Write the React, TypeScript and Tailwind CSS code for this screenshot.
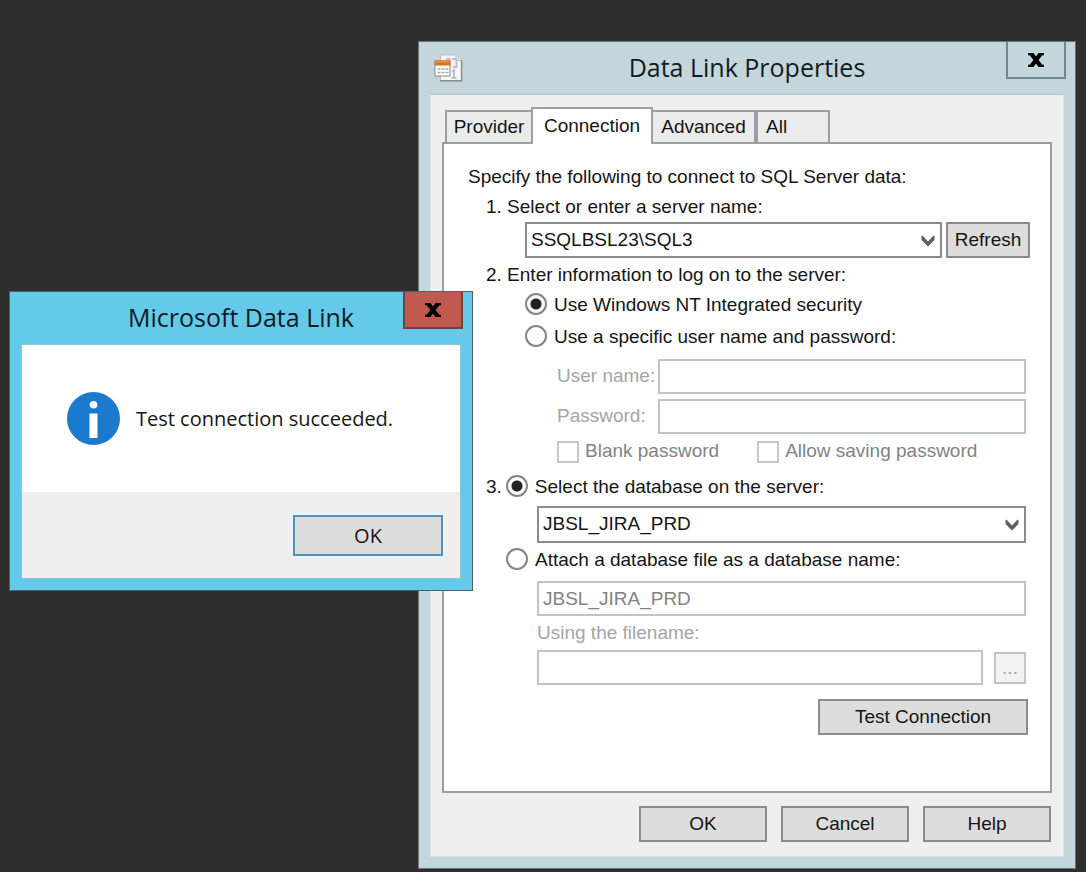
import type { ReactNode } from "react";

const TITLE_FONT = "font-['Open_Sans','Noto_Sans',sans-serif]";

const DATABASE = "JBSL_JIRA_PRD";
const SERVER = "SSQLBSL23\\SQL3";

function CloseGlyph() {
  return (
    <svg width="16" height="14" viewBox="0 0 16 14" aria-hidden="true">
      <path
        d="M0 0h5.500L8 3.600 10.500 0H16v2.300h-1.700L10.600 7l3.700 4.700H16V14h-5.500L8 10.400 5.500 14H0v-2.300h1.700L5.400 7 1.700 2.300H0Z"
        fill="#000"
      />
    </svg>
  );
}

function DataLinkIcon() {
  return (
    <svg width="29" height="28" viewBox="0 0 29 28" aria-hidden="true">
      <path d="M6.500 1h16l5 5v20.500h-21Z" fill="#f6f6f8" stroke="#bcbcbe" />
      <path d="M6 26.800h22M27.600 6v21" stroke="#8c8c8e" strokeWidth="1.500" />
      <path d="M22 1v5.500h5.500" fill="#e6e6e8" stroke="#b4b4b6" />
      <path
        d="M12 5h3.500v3M18 5h4.500v8H19M18 17.500l2-1.500v8M17.500 24h5"
        fill="none"
        stroke="#c0bed2"
        strokeWidth="2"
      />
      <rect x="1" y="7" width="15" height="15" fill="#fff" stroke="#8f8583" />
      <rect x="0.500" y="6.500" width="16" height="5" fill="#d9731d" />
      <path d="M1 8h15" stroke="#f0a050" />
      <path
        d="M3.500 15h3M7.500 15h3M11.500 15h3M3.500 18.500h3M7.500 18.500h3M11.500 18.500h3"
        stroke="#a8a8a8"
        strokeWidth="1.500"
      />
    </svg>
  );
}

function InfoIcon() {
  return (
    <svg width="53" height="53" viewBox="0 0 53 53" aria-hidden="true">
      <circle cx="26.500" cy="26.500" r="26.500" fill="#1b7acd" />
      <circle cx="26.500" cy="12.800" r="3.800" fill="#fff" />
      <rect x="22.500" y="21.500" width="8" height="24.500" fill="#fff" />
    </svg>
  );
}

function TitleBar({
  title,
  icon,
  closeClass,
}: {
  title: string;
  icon?: ReactNode;
  closeClass: string;
}) {
  return (
    <header className="grid h-[52px] grid-cols-[1fr_auto_1fr] px-[9px]">
      <div className="self-center pl-1.5">{icon}</div>
      <h1 className={`self-center text-[25px] text-[#101c22] ${TITLE_FONT}`}>
        {title}
      </h1>
      <button
        type="button"
        aria-label="Close"
        className={`flex h-[37px] w-[60px] items-center justify-center justify-self-end border-2 border-t-0 ${closeClass}`}
      >
        <CloseGlyph />
      </button>
    </header>
  );
}

function Button({
  children,
  className,
}: {
  children: ReactNode;
  className: string;
}) {
  return (
    <button
      type="button"
      className={`border-2 border-[#8c8c8c] bg-[#dddddd] ${className}`}
    >
      {children}
    </button>
  );
}

function ComboBox({
  label,
  value,
  className,
}: {
  label: string;
  value: string;
  className: string;
}) {
  return (
    <div className={`relative ${className}`}>
      <select
        aria-label={label}
        defaultValue={value}
        className="h-full w-full appearance-none border-2 border-[#8c8c8c] bg-white px-1 outline-none"
      >
        <option>{value}</option>
      </select>
      <svg
        width="14"
        height="12"
        viewBox="0 0 14 12"
        className="pointer-events-none absolute top-[13px] right-[7px]"
        aria-hidden="true"
      >
        <path d="M0.500 0.500v4.500L7 11.500l6.500-6.500V0.500L11.500 1.500 7 6.500 2.500 1.500Z" fill="#606060" />
      </svg>
    </div>
  );
}

function Radio({
  name,
  label,
  checked,
}: {
  name: string;
  label: string;
  checked?: boolean;
}) {
  return (
    <label className="flex items-center gap-[7px]">
      <input
        type="radio"
        name={name}
        defaultChecked={checked}
        className="mb-[3px] size-[22px] appearance-none rounded-full border-2 border-[#848484] bg-white checked:bg-[radial-gradient(#222_5px,transparent_6px)]"
      />
      {label}
    </label>
  );
}

function CheckBox({ label }: { label: string }) {
  return (
    <label className="flex items-center gap-1.5 text-[#838383]">
      <input
        type="checkbox"
        disabled
        className="size-[22px] appearance-none border-2 border-[#c3c5c8] bg-white"
      />
      {label}
    </label>
  );
}

const inputClass =
  "h-[35px] w-full min-w-0 border-2 border-[#c0c3c7] bg-white px-1 text-[#838383] outline-none";

const tabClass = "h-8 border-2 border-b-0 border-[#9b9ea4] bg-[#ebebeb]";

function ConnectionForm() {
  return (
    <form
      role="tabpanel"
      className="border-2 border-[#9b9ea4] bg-white pt-[18px] pr-5 pb-14 pl-6"
    >
      <p className="flex h-[30px] items-center">
        Specify the following to connect to SQL Server data:
      </p>

      <div className="pl-[18px]">
        <p className="flex h-[30px] items-center">
          1. Select or enter a server name:
        </p>
        <div className="flex h-[37px] gap-1 pb-px pl-[39px]">
          <ComboBox label="Server name" value={SERVER} className="flex-1" />
          <Button className="w-[84px]">Refresh</Button>
        </div>

        <p className="flex h-8 items-center">
          2. Enter information to log on to the server:
        </p>
        <div className="pr-1 pl-[39px]">
          <div className="flex h-7 items-center">
            <Radio name="auth" label="Use Windows NT Integrated security" checked />
          </div>
          <div className="flex h-9 items-center">
            <Radio name="auth" label="Use a specific user name and password:" />
          </div>
          <div className="grid grid-cols-[101px_1fr] items-center gap-y-[5px] pt-1 pl-8">
            <label htmlFor="user" className="text-[#a5a5a5]">
              User name:
            </label>
            <input id="user" type="text" disabled className={inputClass} />
            <label htmlFor="password" className="text-[#a5a5a5]">
              Password:
            </label>
            <input id="password" type="password" disabled className={inputClass} />
          </div>
          <div className="flex h-[35px] items-center gap-[38px] pl-8">
            <CheckBox label="Blank password" />
            <CheckBox label="Allow saving password" />
          </div>
        </div>

        <div className="flex h-[37px] items-center gap-1">
          <span>3.</span>
          <Radio name="source" label="Select the database on the server:" checked />
        </div>
        <div className="pr-1 pl-[51px]">
          <ComboBox label="Database" value={DATABASE} className="h-[37px]" />
        </div>
        <div className="flex h-[35px] items-center pl-5">
          <Radio name="source" label="Attach a database file as a database name:" />
        </div>
        <div className="pt-[3px] pr-1 pl-[51px]">
          <input
            type="text"
            aria-label="Database name"
            disabled
            defaultValue={DATABASE}
            className={`block ${inputClass}`}
          />
          <label
            htmlFor="filename"
            className="flex h-[34px] items-center text-[#a5a5a5]"
          >
            Using the filename:
          </label>
          <div className="flex items-center gap-[11px]">
            <input id="filename" type="text" disabled className={inputClass} />
            <button
              type="button"
              disabled
              className="h-8 w-8 shrink-0 border-2 border-[#c3c5c8] bg-[#f2f2f2] text-[#a5a5a5]"
            >
              ...
            </button>
          </div>
        </div>
        <div className="flex justify-end pt-3.5 pr-0.5">
          <Button className="h-9 w-[210px]">Test Connection</Button>
        </div>
      </div>
    </form>
  );
}

function DataLinkWindow() {
  return (
    <section className="absolute top-[41px] right-[10px] left-[418px] border border-[#66747a] bg-[#c3d6dc]">
      <TitleBar
        title="Data Link Properties"
        icon={<DataLinkIcon />}
        closeClass="border-[#78868d]"
      />
      <div className="mx-[11px] mb-[11px] border border-[#dbe2e5] border-t-[#b4c4ca] bg-[#efefef] px-[11px] pt-3 pb-3.5">
        <div role="tablist" className="flex items-end pl-[3px]">
          <button type="button" role="tab" className={`w-[86px] border-r-0 ${tabClass}`}>
            Provider
          </button>
          <button
            type="button"
            role="tab"
            aria-selected="true"
            className="-mb-0.5 h-[37px] w-[122px] border-2 border-b-0 border-[#9b9ea4] bg-white"
          >
            Connection
          </button>
          <button type="button" role="tab" className={`w-[103px] border-l-0 ${tabClass}`}>
            Advanced
          </button>
          <button
            type="button"
            role="tab"
            className={`w-[74px] pl-2 text-left ${tabClass}`}
          >
            All
          </button>
        </div>
        <ConnectionForm />
        <div className="flex justify-end gap-3.5 pt-[13px] pr-px">
          <Button className="h-9 w-32">OK</Button>
          <Button className="h-9 w-32">Cancel</Button>
          <Button className="h-9 w-32">Help</Button>
        </div>
      </div>
    </section>
  );
}

function MessageBox() {
  return (
    <section
      role="dialog"
      aria-label="Microsoft Data Link"
      className="absolute top-[291px] left-[9px] w-[464px] border border-[#4f6068] bg-[#65c9ea]"
    >
      <TitleBar
        title="Microsoft Data Link"
        closeClass="border-[#6b4544] bg-[#c2594e]"
      />
      <div
        className={`mx-[11px] mb-[11px] border border-[#8fc3d8] bg-white text-xl ${TITLE_FONT}`}
      >
        <div className="flex h-[147px] items-center gap-4 pl-[45px]">
          <InfoIcon />
          <p>Test connection succeeded.</p>
        </div>
        <div className="flex justify-end bg-[#efefef] pt-[23px] pr-[17px] pb-[22px]">
          <button
            type="button"
            className="h-[41px] w-[150px] border-2 border-[#4f93c4] bg-[#dddddd]"
          >
            OK
          </button>
        </div>
      </div>
    </section>
  );
}

export default function App() {
  return (
    <main className="relative min-h-screen overflow-hidden bg-[#2e2e2e] font-['Liberation_Sans',Arial,sans-serif] text-[19px] whitespace-nowrap text-[#151515]">
      <DataLinkWindow />
      <MessageBox />
    </main>
  );
}
